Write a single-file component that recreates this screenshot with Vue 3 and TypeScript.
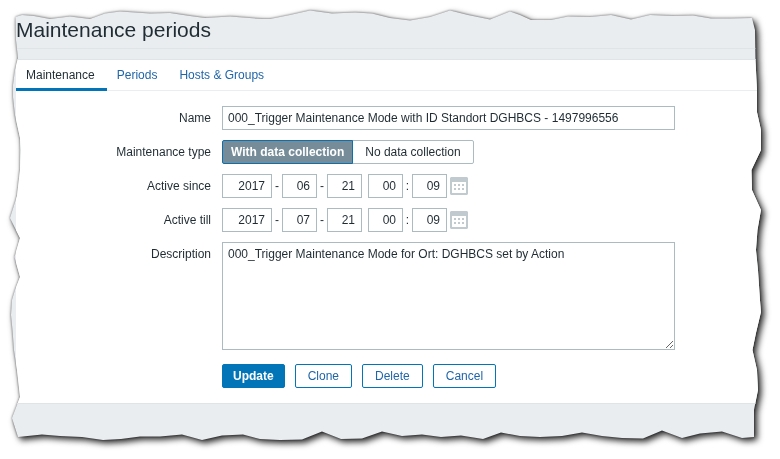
<script setup lang="ts">
import { ref } from 'vue'

interface DateFields {
  key: string
  label: string
  year: string
  month: string
  day: string
  hour: string
  minute: string
}

const tabs = ['Maintenance', 'Periods', 'Hosts & Groups']
const activeTab = ref('Maintenance')
const name = ref('000_Trigger Maintenance Mode with ID Standort DGHBCS - 1497996556')
const types = ['With data collection', 'No data collection']
const type = ref('With data collection')
const description = ref('000_Trigger Maintenance Mode for Ort: DGHBCS set by Action')
const dates = ref<DateFields[]>([
  { key: 'since', label: 'Active since', year: '2017', month: '06', day: '21', hour: '00', minute: '09' },
  { key: 'till', label: 'Active till', year: '2017', month: '07', day: '21', hour: '00', minute: '09' },
])
const actions = ['Update', 'Clone', 'Delete', 'Cancel']

// Outline of the torn sheet on a 780 x 459 grid, scaled to the sheet's box by the clip path.
const tornEdge = [
  '15.5,17 22,15 34,16 50,19 70,16.5 90,19 105,13.5 120,11.5 150,13.5 170,13 190,16 205,18 230,16.5 262,19 270,19',
  '290,15 310,10.5 332,13.5 355,12.5 372,13.5 390,18 410,20.5 430,17 450,10.5 468,15 490,19.5 510,11.5 520,15',
  '531,20 551,20 568,16.5 590,17 611,15 631,19.5 650,15 673,16 693,15.5 711,18.5 730,18.5 752,18',
  '755,30 755.5,60 757,90 757,112 761,130 761,150 751.5,170 752,190 761,210 757.5,230 756,250 758,270 760,300',
  '761,312 756,333 752.5,350 757,370 758,390 754,410 754,437',
  '742,438 722,431.5 700,433.5 682,438 662,430.5 643,438.5 622,438 602,436 582,432.5 562,436 540,437 520,436',
  '501,432.5 483,439 461,435.5 441,437 422,434.5 402,436 382,431.5 362,438.5 341,439 322,431.5 302,439.5 280,440',
  '260,439 243,434.5 222,435.5 202,440 182,434.5 160,436.5 140,436.5 121,439 103,440 82,437 60,436 42,434.5 18,437',
  '12,418 20,397 17,370 14,350 12.5,330 11,315 12,300 15,290 20,277 14.5,257 20,238 10,218 17,196 20,170 20.5,150',
  '20,138 15,115 13,97 13,85 15,70 18,58 16,40',
].join(' ')
</script>

<template>
  <div class="shadow">
    <svg class="defs" width="0" height="0" aria-hidden="true">
      <clipPath id="torn" clipPathUnits="objectBoundingBox" transform="scale(0.00128205 0.00217865)">
        <polygon :points="tornEdge" />
      </clipPath>
    </svg>
    <main class="sheet">
      <header class="head">
        <h1>Maintenance periods</h1>
      </header>
      <form class="panel" @submit.prevent>
        <nav class="tabs">
          <a
            v-for="tab in tabs"
            :key="tab"
            href="#"
            class="tab"
            :class="{ active: tab === activeTab }"
            @click.prevent="activeTab = tab"
          >{{ tab }}</a>
        </nav>
        <div class="rows">
          <div class="row">
            <label class="label" for="name">Name</label>
            <input id="name" v-model="name" class="field wide" type="text">
          </div>
          <div class="row" role="radiogroup" aria-labelledby="type-label">
            <span id="type-label" class="label">Maintenance type</span>
            <div class="segments">
              <label v-for="t in types" :key="t" class="segment" :class="{ on: t === type }">
                <input v-model="type" type="radio" name="type" :value="t">{{ t }}
              </label>
            </div>
          </div>
          <div v-for="d in dates" :key="d.key" class="row">
            <label class="label" :for="d.key">{{ d.label }}</label>
            <div class="date">
              <input :id="d.key" v-model="d.year" class="field num year" type="text" aria-label="Year">
              <span class="sep">-</span>
              <input v-model="d.month" class="field num" type="text" aria-label="Month">
              <span class="sep">-</span>
              <input v-model="d.day" class="field num" type="text" aria-label="Day">
              <span class="space"></span>
              <input v-model="d.hour" class="field num" type="text" aria-label="Hour">
              <span class="sep colon">:</span>
              <input v-model="d.minute" class="field num" type="text" aria-label="Minute">
              <button class="calendar" type="button" aria-label="Calendar">
                <svg width="18" height="18" viewBox="0 0 18 18">
                  <path
                    fill="#c0cacf"
                    fill-rule="evenodd"
                    d="M1 0H17L18 1V17L17 18H1L0 17V1ZM2 5V16H16V5Z"
                  />
                  <path
                    fill="#c0cacf"
                    d="M4 7h2v2H4zM8 7h2v2H8zM12 7h2v2H12zM4 11h2v2H4zM8 11h2v2H8zM12 11h2v2H12z"
                  />
                </svg>
              </button>
            </div>
          </div>
          <div class="row">
            <label class="label" for="description">Description</label>
            <textarea id="description" v-model="description" class="field wide area"></textarea>
          </div>
          <div class="row buttons">
            <div class="actions">
              <button
                v-for="(a, i) in actions"
                :key="a"
                class="button"
                :class="{ primary: i === 0 }"
                :type="i === 0 ? 'submit' : 'button'"
              >{{ a }}</button>
            </div>
          </div>
        </div>
      </form>
    </main>
  </div>
</template>

<style>
body {
  background: #fff;
}
</style>

<style scoped>
.shadow {
  filter: drop-shadow(0 0 1px rgba(0, 0, 0, 0.5)) drop-shadow(3px 3px 3px rgba(0, 0, 0, 0.85));
}

.defs {
  position: absolute;
}

.sheet {
  box-sizing: border-box;
  min-height: 100vh;
  padding: 0 0 55px 16px;
  background: #e9edf0;
  clip-path: url(#torn);
  color: #1f2c33;
  font: 12px/14px "Liberation Sans", Arial, sans-serif;
}

.sheet * {
  box-sizing: border-box;
}

.head {
  padding: 18px 0 6px;
  border-bottom: 1px solid #dfe4e7;
}

h1 {
  margin: 0;
  font-size: 21px;
  font-weight: 400;
  line-height: 24px;
}

.panel {
  margin-top: 10px;
  background: #fff;
  border: solid #dfe4e7;
  border-width: 1px 0;
}

.tabs {
  display: flex;
  border-bottom: 1px solid #ebeef0;
}

.tab {
  margin-bottom: -1px;
  padding: 8px 12px 6px 10px;
  border-bottom: 3px solid transparent;
  color: #1f65a8;
  text-decoration: none;
}

.tab.active {
  border-color: #0275b8;
  color: #1f2c33;
}

.rows {
  display: flex;
  flex-direction: column;
  gap: 10px;
  padding: 15px 16px 15px 0;
}

.row {
  display: grid;
  grid-template-columns: minmax(110px, 195px) minmax(0, 1fr);
  column-gap: 11px;
}

.label {
  padding-top: 5px;
  text-align: right;
}

.field {
  height: 24px;
  margin: 0;
  padding: 0 5px;
  border: 1px solid #acbbc2;
  border-radius: 0;
  outline: none;
  background: #fff;
  color: inherit;
  font: inherit;
}

.wide {
  width: 100%;
  max-width: 453px;
}

.area {
  display: block;
  height: 108px;
  padding-top: 4px;
  resize: both;
}

.segments,
.date,
.actions {
  display: flex;
}

.segment {
  position: relative;
  height: 24px;
  padding: 0 12px;
  border: 1px solid #acbbc2;
  border-radius: 0 2px 2px 0;
  line-height: 22px;
}

.segment.on {
  margin-right: -1px;
  padding: 0 8px;
  z-index: 1;
  border-color: #0f6fac;
  border-radius: 2px 0 0 2px;
  background: #768d99;
  color: #fff;
  font-weight: 700;
}

.segment input {
  position: absolute;
  opacity: 0;
  margin: 0;
}

.date {
  align-items: center;
}

.num {
  width: 35px;
  padding-right: 6px;
  text-align: right;
}

.year {
  width: 50px;
}

.sep {
  width: 10px;
  text-align: center;
}

.colon {
  width: 9px;
}

.space {
  width: 6px;
}

.calendar {
  display: flex;
  margin-left: 3px;
  padding: 0;
  border: 0;
  background: none;
}

.buttons {
  padding-top: 4px;
}

.actions {
  grid-column: 2;
  gap: 10px;
}

.button {
  height: 24px;
  padding: 0 12px;
  border: 1px solid #0275b8;
  border-radius: 2px;
  background: #fff;
  color: #1f65a8;
  font: inherit;
}

.button.primary {
  padding: 0 10px;
  background: #0275b8;
  color: #fff;
  font-weight: 700;
}
</style>
